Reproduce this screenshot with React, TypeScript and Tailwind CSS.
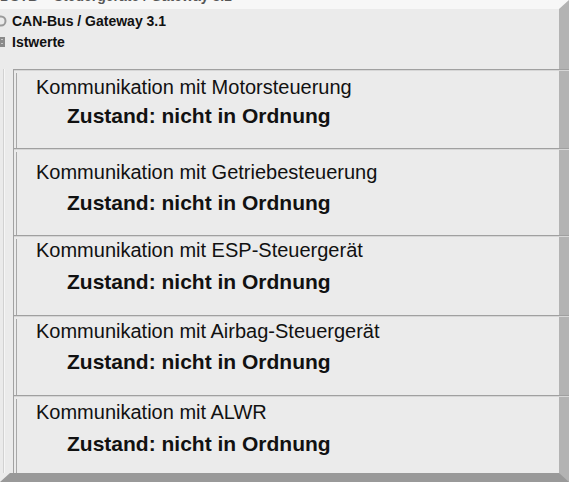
const rows = [
  { name: 'Kommunikation mit Motorsteuerung', h: 'h-[79px]', pt: 'pt-[5px]', gap: 'mt-[5px]' },
  { name: 'Kommunikation mit Getriebesteuerung', h: 'h-[87px]', pt: 'pt-[11px]', gap: 'mt-[7px]' },
  { name: 'Kommunikation mit ESP-Steuergerät', h: 'h-[80px]', pt: 'pt-[2px]', gap: 'mt-[8px]' },
  { name: 'Kommunikation mit Airbag-Steuergerät', h: 'h-[80px]', pt: 'pt-[3px]', gap: 'mt-[7px]' },
  { name: 'Kommunikation mit ALWR', h: 'flex-1', pt: 'pt-[4px]', gap: 'mt-[8px]' },
];

export default function App() {
  return (
    <div className="w-[569px] h-[482px] box-border border-t-[9px] border-t-[#f7f7f7] border-r-[10px] border-r-[#b3b3b3] border-b-[9px] border-b-[#999999] border-l-[10px] border-l-[#ebebeb] bg-[#ebebeb] font-['Liberation_Sans',Arial,sans-serif] text-[#111]">
      <div className="-ml-[10px] -mt-[9px] w-[569px] h-[473px] flex flex-col">
        {/* cut-off breadcrumb line */}
        <div className="h-[9px] w-[559px] overflow-hidden bg-[#f7f7f7]">
          <div className="-mt-[12px] text-[14px] leading-[16px] font-bold text-[#555] whitespace-nowrap">
            DSTB – Steuergeräte / Gateway 3.1
          </div>
        </div>

        {/* header */}
        <div className="h-[60px] pt-[2px] flex flex-col gap-[1px]">
          <div className="flex items-center h-[20px] gap-[5px]">
            <svg width="7" height="12" viewBox="0 0 7 12" className="shrink-0">
              <circle cx="1" cy="6" r="4.5" fill="none" stroke="#9a9a9a" strokeWidth="2" />
            </svg>
            <span className="text-[14px] font-bold leading-[20px]">CAN-Bus / Gateway 3.1</span>
          </div>
          <div className="flex items-center h-[20px] gap-[6px]">
            <svg width="6" height="10" viewBox="0 0 6 10" className="shrink-0">
              <rect x="0" y="0" width="5" height="10" fill="#8a8a8a" />
              <rect x="1" y="2" width="2" height="1" fill="#c8c8c8" />
              <rect x="1" y="6" width="2" height="1" fill="#c8c8c8" />
            </svg>
            <span className="text-[14px] font-bold leading-[20px]">Istwerte</span>
          </div>
        </div>

        {/* list */}
        <div className="flex-1 flex">
          <div className="w-[13px] shrink-0 pl-[3px]">
            <div className="h-full w-[2px] border-l border-[#d2d2d2] bg-[#f6f6f6]" />
          </div>
          <div className="flex-1 flex flex-col border-l border-[#a2a2a2]">
            {rows.map((r) => (
              <div
                key={r.name}
                className={`${r.h} flex border-t border-t-[#a0a0a0] shadow-[inset_0_1px_0_#d6d6d6]`}
              >
                <div className="w-[3px] mt-[3px] shrink-0 border-r border-[#a8a8a8]" />
                <div className={`${r.pt} pl-[19px]`}>
                  <div className="text-[20px] leading-[24px] whitespace-nowrap">{r.name}</div>
                  <div className={`${r.gap} pl-[31px] text-[21px] leading-[24px] font-bold whitespace-nowrap`}>
                    Zustand: nicht in Ordnung
                  </div>
                </div>
              </div>
            ))}
          </div>
        </div>
      </div>
    </div>
  );
}
